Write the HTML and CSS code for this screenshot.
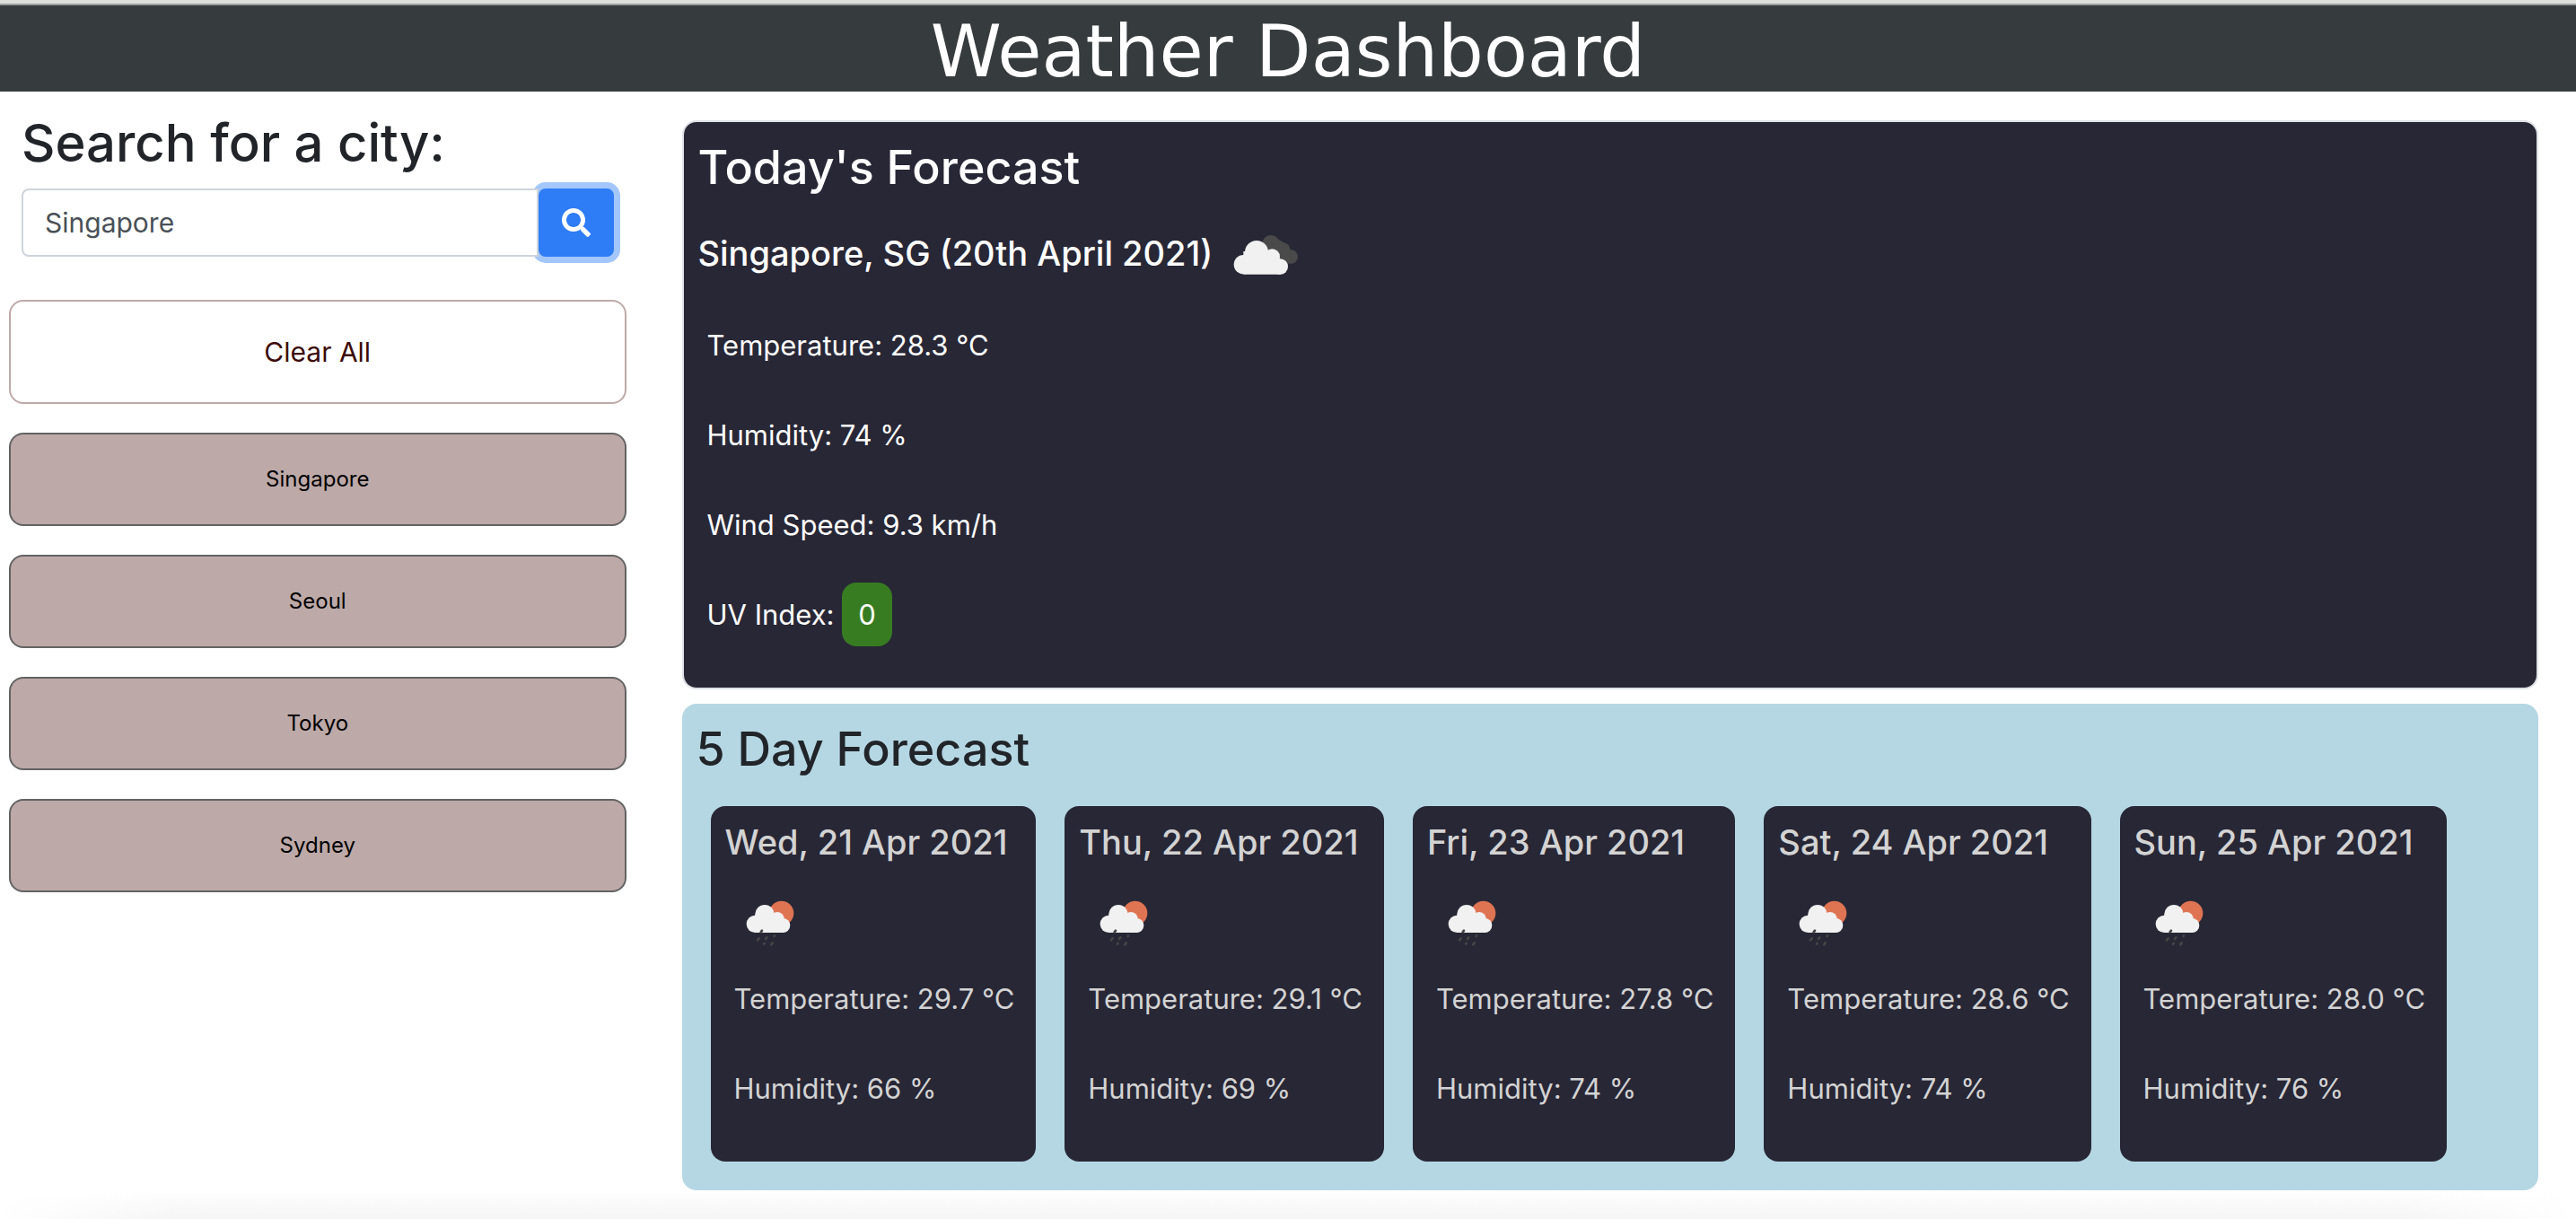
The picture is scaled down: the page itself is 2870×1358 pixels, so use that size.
FILE: index.html
```html
<!DOCTYPE html>
<html lang="en">
<head>
<meta charset="utf-8">
<meta name="viewport" content="width=device-width, initial-scale=1">
<title>Weather Dashboard</title>
<link rel="stylesheet" href="styles.css">
</head>
<body>
<svg class="sprite" aria-hidden="true">
  <symbol id="clouds" viewBox="0 -54 300 300">
    <g fill="#4a4a4a"><circle cx="165" cy="66" r="30"/><circle cx="209" cy="81" r="19"/><circle cx="232" cy="108" r="23"/><path d="M150 60L180 45L214 64L240 95L228 131L150 110Z"/></g>
    <g fill="#f1f1f1"><circle cx="73" cy="134" r="32"/><circle cx="117" cy="93" r="39"/><circle cx="169" cy="108" r="26"/><circle cx="196" cy="141" r="26"/><path d="M73 90H170L198 118V167H73Z"/></g>
  </symbol>
  <symbol id="sun-rain" viewBox="-36 -84 300 300">
    <circle cx="152" cy="82" r="41" fill="#df7452"/>
    <g fill="#f1f1f1"><circle cx="64" cy="118" r="29"/><circle cx="96" cy="86" r="32"/><circle cx="138" cy="101" r="23"/><circle cx="157" cy="123" r="24"/><path d="M64 86H138L160 101V147H64Z"/></g>
    <g stroke="#464646" stroke-width="8" stroke-linecap="round"><path d="M83 145L87 140M128 159L129 157M99 168L103 163M72 172L77 166M93 185L95 183M118 187L122 181"/></g>
  </symbol>
</svg>

<header class="banner"><h1 class="banner-title">Weather Dashboard</h1></header>

<main class="layout">
  <aside class="sidebar">
    <form class="search">
      <label class="search-label" for="city">Search for a city:</label>
      <div class="search-group">
        <input class="search-input" id="city" type="text" value="Singapore">
        <button class="search-button" type="button" aria-label="Search">
          <svg class="search-icon" viewBox="0 0 512 512" aria-hidden="true"><path fill="currentColor" d="M505 442.7L405.3 343c-4.500-4.500-10.600-7-17-7H372c27.600-35.300 44-79.700 44-128C416 93.100 322.900 0 208 0S0 93.100 0 208s93.100 208 208 208c48.300 0 92.700-16.400 128-44v16.300c0 6.400 2.500 12.500 7 17l99.700 99.700c9.400 9.400 24.600 9.400 33.900 0l28.300-28.300c9.400-9.400 9.400-24.600.1-34zM208 336c-70.700 0-128-57.200-128-128 0-70.700 57.200-128 128-128 70.700 0 128 57.200 128 128 0 70.700-57.200 128-128 128z"/></svg>
        </button>
      </div>
    </form>
    <div class="history">
      <button class="clear" type="button">Clear All</button>
      <button class="city" type="button">Singapore</button>
      <button class="city" type="button">Seoul</button>
      <button class="city" type="button">Tokyo</button>
      <button class="city" type="button">Sydney</button>
    </div>
  </aside>

  <div class="content">
    <section class="today">
      <h2 class="section-title">Today's Forecast</h2>
      <div class="place">
        <h3 class="place-name">Singapore, SG (20th April 2021)</h3>
        <svg class="weather-icon" role="img" aria-label="Broken clouds"><use href="#clouds"/></svg>
      </div>
      <p class="metric">Temperature: 28.3 °C</p>
      <p class="metric">Humidity: 74 %</p>
      <p class="metric">Wind Speed: 9.3 km/h</p>
      <p class="metric">UV Index: <span class="uv">0</span></p>
    </section>

    <section class="week">
      <h2 class="section-title">5 Day Forecast</h2>
      <div class="days">
        <article class="day">
          <h3 class="day-title">Wed, 21 Apr 2021</h3>
          <svg class="weather-icon" role="img" aria-label="Rain"><use href="#sun-rain"/></svg>
          <p class="metric">Temperature: 29.7 °C</p>
          <p class="metric">Humidity: 66 %</p>
        </article>
        <article class="day">
          <h3 class="day-title">Thu, 22 Apr 2021</h3>
          <svg class="weather-icon" role="img" aria-label="Rain"><use href="#sun-rain"/></svg>
          <p class="metric">Temperature: 29.1 °C</p>
          <p class="metric">Humidity: 69 %</p>
        </article>
        <article class="day">
          <h3 class="day-title">Fri, 23 Apr 2021</h3>
          <svg class="weather-icon" role="img" aria-label="Rain"><use href="#sun-rain"/></svg>
          <p class="metric">Temperature: 27.8 °C</p>
          <p class="metric">Humidity: 74 %</p>
        </article>
        <article class="day">
          <h3 class="day-title">Sat, 24 Apr 2021</h3>
          <svg class="weather-icon" role="img" aria-label="Rain"><use href="#sun-rain"/></svg>
          <p class="metric">Temperature: 28.6 °C</p>
          <p class="metric">Humidity: 74 %</p>
        </article>
        <article class="day">
          <h3 class="day-title">Sun, 25 Apr 2021</h3>
          <svg class="weather-icon" role="img" aria-label="Rain"><use href="#sun-rain"/></svg>
          <p class="metric">Temperature: 28.0 °C</p>
          <p class="metric">Humidity: 76 %</p>
        </article>
      </div>
    </section>
  </div>
</main>
<footer class="page-end"></footer>
</body>
</html>
```
FILE: styles.css
```css
* {
  box-sizing: border-box;
}

body {
  margin: 0;
  background: #fff;
  color: #212529;
  font-family: Inter, "Liberation Sans", sans-serif;
  font-size: 31px;
  line-height: 48px;
}

h1, h2, h3, p {
  margin: 0;
}

button, input {
  font-family: inherit;
}

.sprite {
  display: none;
}

.banner {
  padding: 10px 16px 0;
  border-top: 4px solid #dedfdd;
  background: #363b3e;
  box-shadow: inset 0 2px #999d9b;
  text-align: center;
}

.banner-title {
  color: #fff;
  font-family: "DejaVu Sans", sans-serif;
  font-size: 80px;
  font-weight: 400;
  line-height: 88px;
}

.layout {
  display: grid;
  grid-template-columns: 1fr 3fr;
}

.sidebar {
  padding: 20px 20px 0 10px;
}

.search {
  padding: 0 14px;
}

.search-label {
  display: block;
  margin-bottom: 14px;
  font-size: 58px;
  font-weight: 500;
  line-height: 74px;
}

.search-group {
  display: flex;
}

.search-input {
  position: relative;
  z-index: 1;
  flex: 1;
  min-width: 0;
  height: 76px;
  padding: 0 24px;
  border: 2px solid #ced4da;
  border-radius: 8px 0 0 8px;
  background: #fff;
  color: #495057;
  font-size: 30px;
}

.search-button {
  display: flex;
  align-items: center;
  justify-content: center;
  width: 84px;
  border: 0;
  border-radius: 8px;
  background: #2e7cf6;
  box-shadow: 0 0 0 7px #a3c6fb;
  color: #fff;
}

.search-icon {
  width: 32px;
  height: 32px;
}

.history {
  display: flex;
  flex-direction: column;
  gap: 32px;
  margin-top: 48px;
}

.clear,
.city {
  height: 104px;
  padding: 0 16px 2px;
  border: 2px solid #636363;
  border-radius: 16px;
  background: #bda9a8;
  color: #000;
  font-size: 24px;
}

.clear {
  height: 116px;
  padding-bottom: 0;
  border-color: #bda9a8;
  background: #fff;
  color: #3c0a08;
  font-size: 30px;
}

.content {
  min-width: 0;
  padding: 32px 42px 0;
}

.today {
  padding: 16px 16px 32px;
  border: 2px solid #dee2e6;
  border-radius: 16px;
  background: #282736;
  color: #fff;
}

.section-title {
  font-size: 52px;
  font-weight: 500;
  line-height: 70px;
}

.place {
  display: flex;
  align-items: center;
  gap: 10px;
  height: 104px;
  margin-top: 8px;
}

.place-name,
.day-title {
  font-size: 38px;
  font-weight: 500;
  line-height: 48px;
  white-space: nowrap;
}

.weather-icon {
  display: block;
  width: 100px;
  height: 100px;
}

.metric {
  padding: 27px 10px 25px;
  white-space: nowrap;
}

.uv {
  padding: 17px 18px;
  border-radius: 16px;
  background: #387c22;
}

.week {
  margin-top: 16px;
  padding: 16px 16px 32px;
  border-radius: 16px;
  background: #b5d7e3;
}

.days {
  display: flex;
  gap: 32px;
  margin: 28px 86px 0 16px;
}

.day {
  min-width: 0;
  padding: 16px 16px 32px;
  border-radius: 16px;
  background: #282736;
  color: #d3d3d3;
}

.page-end {
  height: 32px;
  background: linear-gradient(to right, #fff, transparent 200px, transparent calc(100% - 200px), #fff), linear-gradient(#fff, #f5f5f5);
}
```
